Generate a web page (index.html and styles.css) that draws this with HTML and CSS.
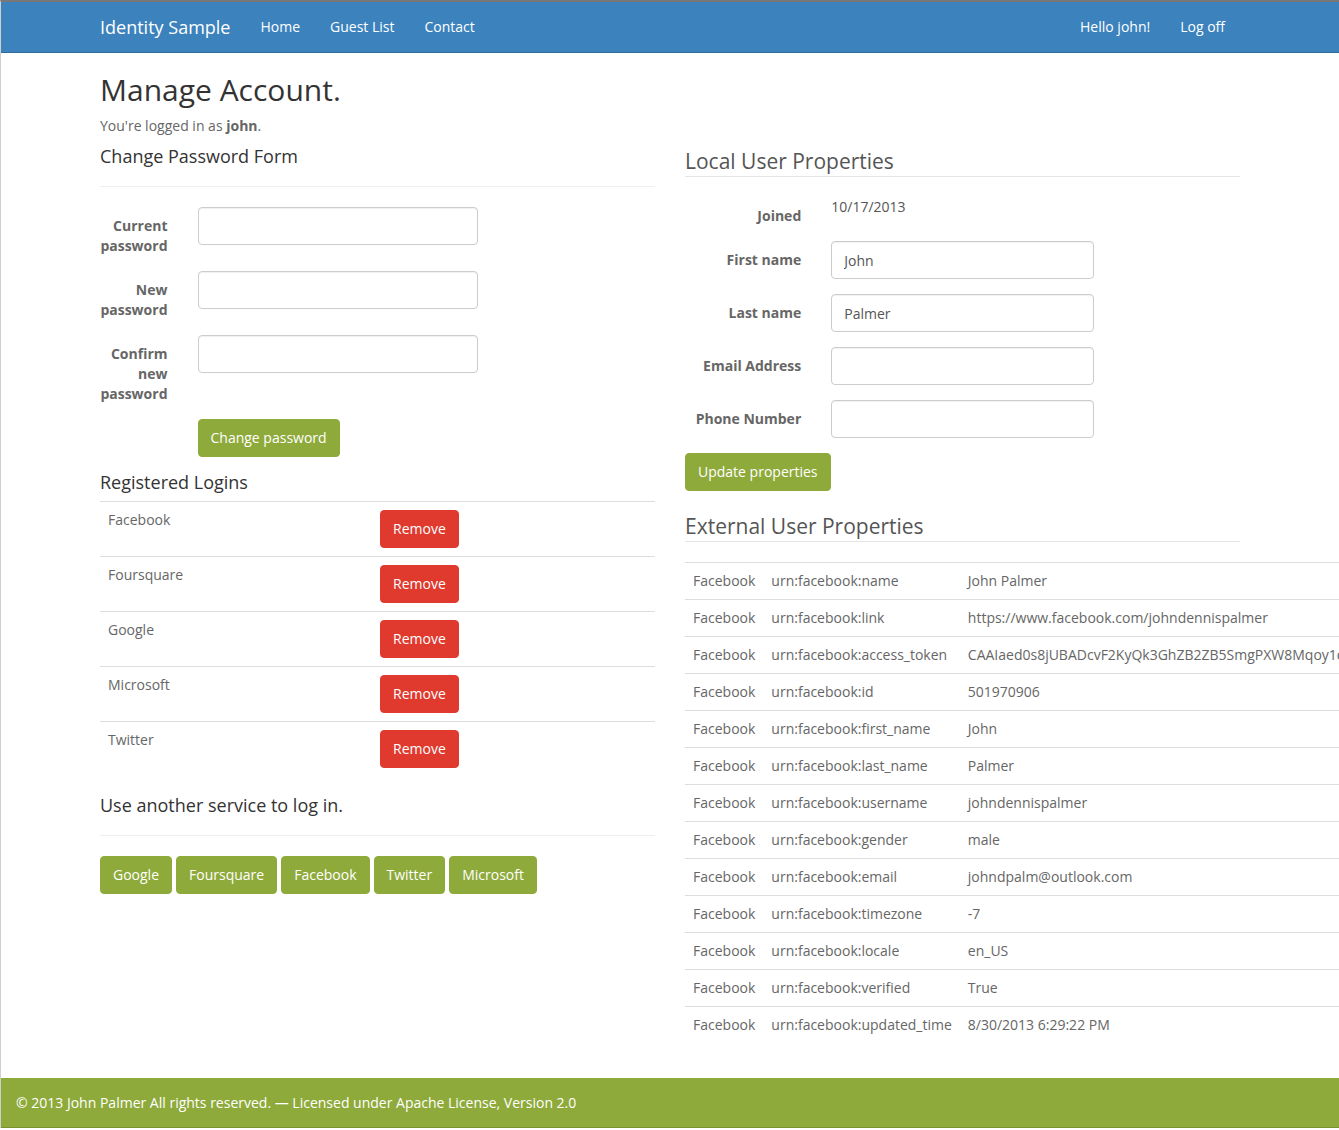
FILE: index.html
```html
<!DOCTYPE html>
<html lang="en">
<head>
<meta charset="utf-8">
<title>Manage Account - Identity Sample</title>
<link rel="stylesheet" href="styles.css">
</head>
<body>
<header class="navbar">
  <div class="nav-inner">
    <a class="brand" href="#">Identity Sample</a>
    <ul class="nav">
      <li><a href="#">Home</a></li>
      <li><a href="#">Guest List</a></li>
      <li><a href="#">Contact</a></li>
    </ul>
    <ul class="nav nav-right">
      <li><a href="#">Hello john!</a></li>
      <li><a href="#">Log off</a></li>
    </ul>
  </div>
</header>

<main class="container">
  <h2 class="page-title">Manage Account.</h2>
  <p class="intro">You're logged in as <strong>john</strong>.</p>

  <div class="row">
    <section class="col">
      <h4 class="sec-title">Change Password Form</h4>
      <hr class="rule">
      <form class="form-h">
        <div class="fg">
          <label class="cl cl-2">Current password</label>
          <div class="ctrl ctrl-10"><input type="password" class="fc"></div>
        </div>
        <div class="fg">
          <label class="cl cl-2">New password</label>
          <div class="ctrl ctrl-10"><input type="password" class="fc"></div>
        </div>
        <div class="fg">
          <label class="cl cl-2">Confirm new password</label>
          <div class="ctrl ctrl-10"><input type="password" class="fc"></div>
        </div>
        <div class="fg">
          <div class="ctrl ctrl-10 offset-2"><button type="button" class="btn btn-green">Change password</button></div>
        </div>
      </form>

      <h4 class="sec-title reg-title">Registered Logins</h4>
      <table class="tbl logins">
        <tbody>
          <tr><td>Facebook</td><td><button type="button" class="btn btn-red">Remove</button></td></tr>
          <tr><td>Foursquare</td><td><button type="button" class="btn btn-red">Remove</button></td></tr>
          <tr><td>Google</td><td><button type="button" class="btn btn-red">Remove</button></td></tr>
          <tr><td>Microsoft</td><td><button type="button" class="btn btn-red">Remove</button></td></tr>
          <tr><td>Twitter</td><td><button type="button" class="btn btn-red">Remove</button></td></tr>
        </tbody>
      </table>

      <h4 class="sec-title other-title">Use another service to log in.</h4>
      <hr class="rule">
      <div class="ext-btns">
        <button type="button" class="btn btn-green">Google</button>
        <button type="button" class="btn btn-green">Foursquare</button>
        <button type="button" class="btn btn-green">Facebook</button>
        <button type="button" class="btn btn-green">Twitter</button>
        <button type="button" class="btn btn-green">Microsoft</button>
      </div>
    </section>

    <section class="col">
      <h3 class="legend">Local User Properties</h3>
      <form class="form-h">
        <div class="fg">
          <label class="cl cl-3">Joined</label>
          <div class="ctrl ctrl-6"><p class="static">10/17/2013</p></div>
        </div>
        <div class="fg">
          <label class="cl cl-3">First name</label>
          <div class="ctrl ctrl-6"><input type="text" class="fc" value="John"></div>
        </div>
        <div class="fg">
          <label class="cl cl-3">Last name</label>
          <div class="ctrl ctrl-6"><input type="text" class="fc" value="Palmer"></div>
        </div>
        <div class="fg">
          <label class="cl cl-3">Email Address</label>
          <div class="ctrl ctrl-6"><input type="text" class="fc"></div>
        </div>
        <div class="fg">
          <label class="cl cl-3">Phone Number</label>
          <div class="ctrl ctrl-6"><input type="text" class="fc"></div>
        </div>
        <div class="actions">
          <button type="button" class="btn btn-green">Update properties</button>
        </div>
      </form>

      <h3 class="legend">External User Properties</h3>
      <table class="tbl claims">
        <tbody>
          <tr><td>Facebook</td><td>urn:facebook:name</td><td>John Palmer</td></tr>
          <tr><td>Facebook</td><td>urn:facebook:link</td><td>https://www.facebook.com/johndennispalmer</td></tr>
          <tr><td>Facebook</td><td>urn:facebook:access_token</td><td>CAAIaed0s8jUBADcvF2KyQk3GhZB2ZB5SmgPXW8Mqoy1cZBhZCqAZAw7ZBQ9ZC3aZBNdKZA0</td></tr>
          <tr><td>Facebook</td><td>urn:facebook:id</td><td>501970906</td></tr>
          <tr><td>Facebook</td><td>urn:facebook:first_name</td><td>John</td></tr>
          <tr><td>Facebook</td><td>urn:facebook:last_name</td><td>Palmer</td></tr>
          <tr><td>Facebook</td><td>urn:facebook:username</td><td>johndennispalmer</td></tr>
          <tr><td>Facebook</td><td>urn:facebook:gender</td><td>male</td></tr>
          <tr><td>Facebook</td><td>urn:facebook:email</td><td>johndpalm@outlook.com</td></tr>
          <tr><td>Facebook</td><td>urn:facebook:timezone</td><td>-7</td></tr>
          <tr><td>Facebook</td><td>urn:facebook:locale</td><td>en_US</td></tr>
          <tr><td>Facebook</td><td>urn:facebook:verified</td><td>True</td></tr>
          <tr><td>Facebook</td><td>urn:facebook:updated_time</td><td>8/30/2013 6:29:22 PM</td></tr>
        </tbody>
      </table>
    </section>
  </div>
</main>

<footer class="footer">
  <p>&copy; 2013 John Palmer All rights reserved. &mdash; Licensed under Apache License, Version 2.0</p>
</footer>
</body>
</html>
```

FILE: styles.css
```css
* {
  box-sizing: border-box;
}

html {
  overflow-x: hidden;
}

body {
  margin: 0;
  border-top: 2px solid #787878;
  border-left: 1px solid #cfcfcf;
  font-family: "Open Sans", "Liberation Sans", sans-serif;
  font-size: 14px;
  line-height: 20px;
  color: #666;
  background: #fff;
}

/* ---------- Navbar ---------- */
.navbar {
  background: #3c82bd;
  border-bottom: 1px solid #2f6b9c;
  height: 51px;
}

.nav-inner {
  width: 1170px;
  margin: 0 auto;
  padding: 0 15px;
  display: flex;
  align-items: flex-start;
}

.brand {
  margin-left: -15px;
  padding: 15px;
  font-size: 18px;
  line-height: 21px;
  color: #fff;
  text-decoration: none;
}

.nav {
  list-style: none;
  margin: 0;
  padding: 0;
  display: flex;
}

.nav a {
  display: block;
  padding: 15px;
  line-height: 20px;
  color: #fff;
  text-decoration: none;
}

.nav-right {
  margin-left: auto;
  margin-right: 0;
}

/* ---------- Layout ---------- */
.container {
  width: 1170px;
  margin: 0 auto;
  padding: 0 15px;
}

.page-title {
  margin: 20px 0 10px;
  font-size: 30px;
  line-height: 33px;
  font-weight: 400;
  color: #333;
}

.intro {
  margin: 0 0 10px;
}

.intro strong {
  font-weight: 700;
}

.row {
  display: flex;
  margin: 0 -15px;
}

.col {
  flex: 0 0 50%;
  min-width: 0;
  padding: 0 15px;
}

.sec-title {
  margin: 0;
  font-size: 18px;
  line-height: 20px;
  font-weight: 400;
  color: #333;
}

.reg-title {
  margin: 3px 0 9px;
}

.other-title {
  margin-top: -1px;
}

.rule {
  border: 0;
  border-top: 1px solid #eee;
  margin: 20px 0;
  height: 0;
}

/* ---------- Forms ---------- */
.fg {
  display: flex;
  margin: 0 -15px 15px;
}

.cl {
  padding: 9px 15px 0;
  text-align: right;
  font-weight: 700;
  color: #666;
}

.cl-2 { flex: 0 0 16.6667%; }
.cl-3 { flex: 0 0 25%; }

.ctrl {
  padding: 0 15px;
}

.ctrl-10 { flex: 0 0 83.3333%; }
.ctrl-6 { flex: 0 0 50%; }
.offset-2 { margin-left: 16.6667%; }

.fc {
  display: block;
  width: 100%;
  max-width: 280px;
  height: 38px;
  padding: 8px 12px;
  font-family: inherit;
  font-size: 14px;
  line-height: 20px;
  color: #555;
  background: #fff;
  border: 1px solid #ccc;
  border-radius: 4px;
  box-shadow: inset 0 1px 1px rgba(0, 0, 0, 0.06);
}

.static {
  margin: 0;
  color: #555;
}

.actions {
  margin-bottom: 20px;
}

/* ---------- Buttons ---------- */
.btn {
  display: inline-block;
  padding: 8px 12px;
  font-family: inherit;
  font-size: 14px;
  line-height: 20px;
  color: #fff;
  border: 1px solid transparent;
  border-radius: 4px;
  cursor: pointer;
}

.btn-green {
  background: #8eaa3a;
  border-color: #8eaa3a;
}

.btn-red {
  background: #e0392e;
  border-color: #e0392e;
}

.ext-btns {
  display: flex;
  gap: 4px;
}

/* ---------- Tables ---------- */
.tbl {
  width: 100%;
  border-collapse: collapse;
  border-spacing: 0;
  margin-bottom: 20px;
}

.tbl td {
  padding: 8px;
  border-top: 1px solid #ddd;
  vertical-align: top;
  text-align: left;
}

.claims td {
  white-space: nowrap;
}

/* ---------- Legend ---------- */
.legend {
  margin: 0 0 20px;
  font-size: 21px;
  line-height: 30px;
  font-weight: 400;
  color: #555;
  border-bottom: 1px solid #e5e5e5;
}

/* ---------- Footer ---------- */
.footer {
  margin-top: 15px;
  background: #8eaa3a;
  border-bottom: 1px solid #789330;
  padding: 15px 15px 14px;
  color: #fff;
}

.footer p {
  margin: 0;
}
```
